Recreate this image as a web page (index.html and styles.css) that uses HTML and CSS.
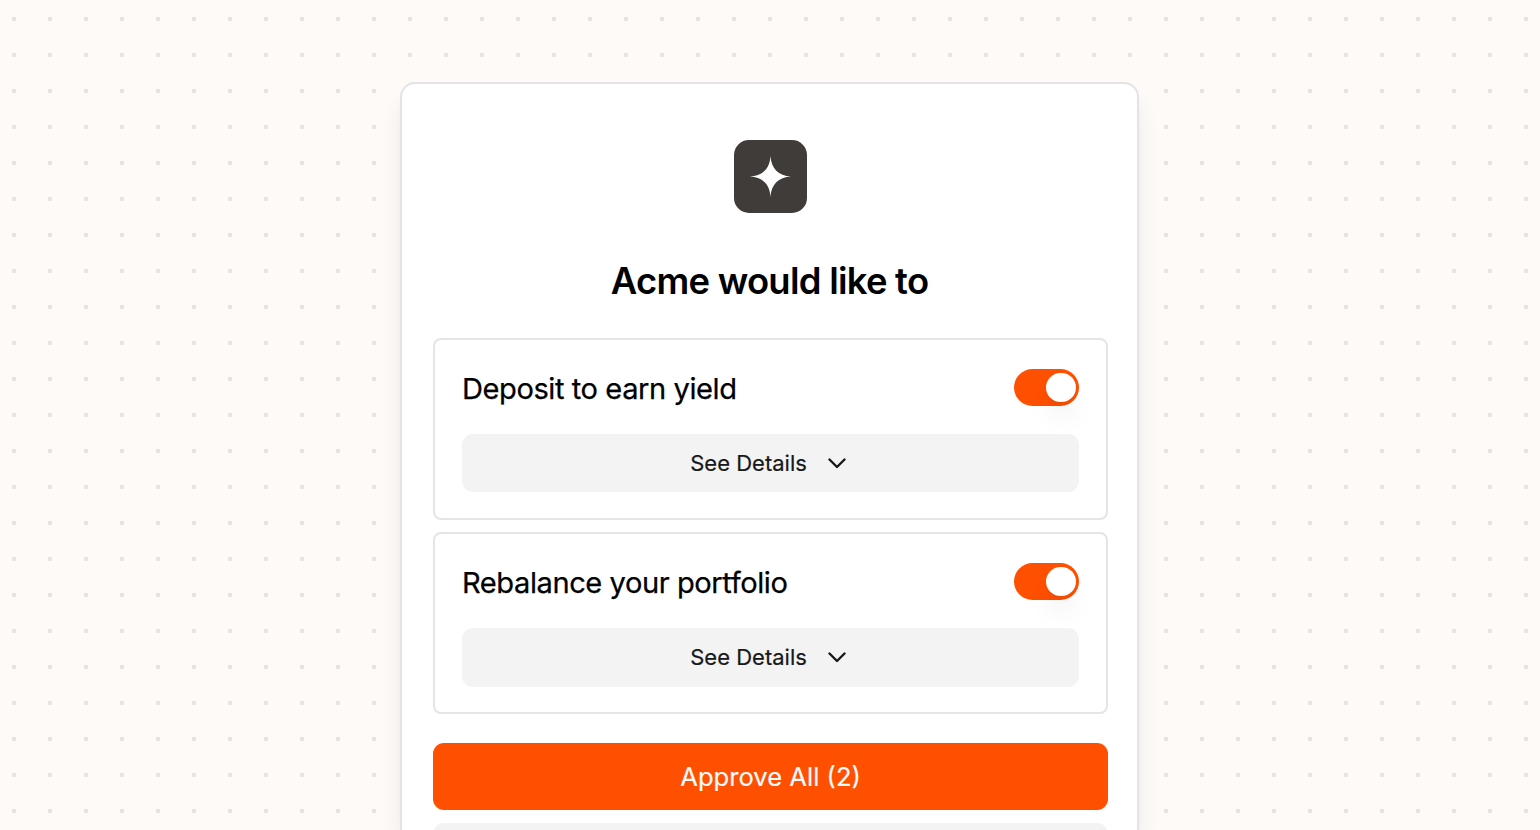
FILE: index.html
```html
<!DOCTYPE html>
<html lang="en">
<head>
<meta charset="utf-8">
<title>Acme permissions</title>
<link rel="stylesheet" href="styles.css">
</head>
<body>
<main class="card">
  <div class="logo">
    <svg class="star" viewBox="0 0 42 42"><path d="M21 0C21.800 13 29 20.200 42 21C29 21.800 21.800 29 21 42C20.200 29 13 21.800 0 21C13 20.200 20.200 13 21 0Z" fill="#fff"/></svg>
  </div>
  <h1 class="title">Acme would like to</h1>
  <section class="list">
    <article class="item">
      <div class="row"><span class="name">Deposit to earn yield</span><span class="toggle"><i class="knob"></i></span></div>
      <button class="details"><span class="label">See Details</span><svg class="chev" viewBox="0 0 18 11"><path d="M1.500 1.500L9 9L16.500 1.500"/></svg></button>
    </article>
    <article class="item">
      <div class="row"><span class="name">Rebalance your portfolio</span><span class="toggle"><i class="knob"></i></span></div>
      <button class="details"><span class="label">See Details</span><svg class="chev" viewBox="0 0 18 11"><path d="M1.500 1.500L9 9L16.500 1.500"/></svg></button>
    </article>
  </section>
  <button class="approve"><span>Approve All (2)</span></button>
  <button class="secondary" aria-label="Decline"></button>
</main>
</body>
</html>
```
FILE: styles.css
```css
* { box-sizing: border-box; }
html, body { margin: 0; height: 830px; overflow: hidden; }
body {
  font-family: Inter, "Liberation Sans", sans-serif;
  background-color: #fefaf7;
  background-image: conic-gradient(from 90deg at 32px 32px, #e9e4e1 90deg, transparent 0);
  background-size: 36px 36px;
  background-position: -20px -15px;
  padding-top: 82px;
}
button { font: inherit; border: 0; margin: 0; padding: 0; }
.card {
  width: 739px;
  height: 748px;
  margin-left: 400.400px;
  padding: 56px 29px 0 30.300px;
  background: #fff;
  border: 2px solid #e4e4e7;
  border-bottom: 0;
  border-radius: 15px 15px 0 0;
  box-shadow: 0 18px 27px -5px rgba(0,0,0,.1), 0 7px 11px -7px rgba(0,0,0,.1);
  overflow: hidden;
}
.logo {
  width: 73px;
  height: 73px;
  margin: 0 auto;
  border-radius: 15px;
  background: #403c39;
  display: flex;
  align-items: center;
  justify-content: center;
}
.star { width: 41px; height: 41px; }
.title {
  margin: 44px 0 0;
  padding-right: 2px;
  height: 48px;
  line-height: 48px;
  text-align: center;
  font-size: 36.400px;
  font-weight: 600;
  letter-spacing: -.73px;
  color: #000;
}
.list { display: flex; flex-direction: column; gap: 12.400px; margin-top: 33px; }
.item {
  height: 182px;
  border: 2px solid #e5e5e5;
  border-radius: 8px;
  padding: 29px 27.300px 0;
}
.row { height: 36.500px; display: flex; align-items: center; justify-content: space-between; }
.name {
  font-size: 29.100px;
  line-height: 36px;
  letter-spacing: -.44px;
  padding-top: 3px;
  color: #000;
  -webkit-text-stroke: .25px #000;
}
.toggle {
  width: 65.500px;
  height: 36.500px;
  padding: 3.600px;
  border-radius: 19px;
  background: #ff4f00;
  display: flex;
  justify-content: flex-end;
}
.knob {
  width: 29.300px;
  height: 29.300px;
  border-radius: 50%;
  background: #fff;
  box-shadow: 0 18px 27px -5px rgba(0,0,0,.1), 0 7px 11px -7px rgba(0,0,0,.1);
}
.details {
  width: 100%;
  height: 58.200px;
  margin-top: 28.500px;
  border-radius: 11px;
  background: #f3f3f3;
  color: #18181b;
  display: flex;
  align-items: center;
  justify-content: center;
  gap: 21px;
  font-size: 22px;
  -webkit-text-stroke: .2px #18181b;
  padding-right: 5px;
}
.label { padding-bottom: 1px; }
.chev { width: 18px; height: 11px; fill: none; stroke: #18181b; stroke-width: 2.400; stroke-linecap: round; stroke-linejoin: round; }
.approve {
  width: 100%;
  height: 67px;
  margin-top: 28.600px;
  border-radius: 11px;
  background: #ff4f00;
  color: #fafafa;
  font-size: 25.600px;
  -webkit-text-stroke: .2px #fafafa;
  display: flex;
  align-items: center;
  justify-content: center;
}
.secondary { display: block; width: 100%; height: 67px; margin-top: 13px; border-radius: 11px; background: #f3f3f3; }
```
